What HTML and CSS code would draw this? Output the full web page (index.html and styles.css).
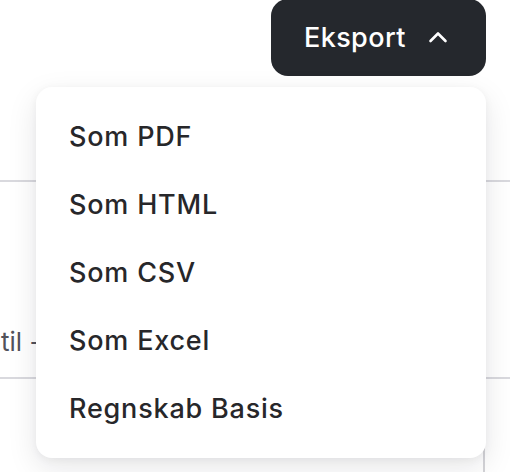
FILE: index.html
```html
<!DOCTYPE html>
<html lang="da">
<head>
<meta charset="utf-8">
<title>Eksport</title>
<link rel="stylesheet" href="styles.css">
</head>
<body>
<div class="page">
  <div class="toolbar">
    <div class="export">
      <button class="export-btn" type="button">
        <span>Eksport</span>
        <svg class="chev" width="20" height="12" viewBox="0 0 20 12"><path d="M2.5 10 L10 2.5 L17.5 10" fill="none" stroke="#fff" stroke-width="2.6" stroke-linecap="round" stroke-linejoin="round"/></svg>
      </button>
      <ul class="menu">
        <li class="menu-item">Som PDF</li>
        <li class="menu-item">Som HTML</li>
        <li class="menu-item">Som CSV</li>
        <li class="menu-item">Som Excel</li>
        <li class="menu-item">Regnskab Basis</li>
      </ul>
    </div>
  </div>
  <div class="table">
    <div class="row">
      <span class="cell">til -</span>
    </div>
    <div class="foot">
      <div class="side-card"></div>
    </div>
  </div>
</div>
</body>
</html>
```
FILE: styles.css
```css
* { box-sizing: border-box; }
html, body { margin: 0; padding: 0; }
body {
  background: #fff;
  font-family: Inter, "Noto Sans", sans-serif;
  width: 510px;
  height: 472px;
  overflow: hidden;
}
.page { position: relative; }
.toolbar {
  display: flex;
  justify-content: flex-end;
  padding-right: 24px;
  height: 180px;
}
.export { position: relative; height: 77px; }
.export-btn {
  display: flex;
  align-items: center;
  gap: 22px;
  height: 77px;
  width: 215px;
  padding: 0 38px 0 33px;
  border: 0;
  border-radius: 17px;
  background: #25282d;
  color: #fff;
  font-family: Inter, sans-serif;
  font-size: 27px;
  font-weight: 450;
  letter-spacing: 0.4px;
  margin-top: -1px;
}
.chev { display: block; margin-top: -2px; }
.menu {
  position: absolute;
  top: 87px;
  right: 0;
  width: 450px;
  margin: 0;
  padding: 15px 0 16px;
  list-style: none;
  background: #fff;
  border-radius: 16px;
  box-shadow: 0 10px 30px rgba(20, 20, 30, 0.10), 0 2px 8px rgba(20, 20, 30, 0.05);
  z-index: 2;
}
.menu-item {
  height: 68px;
  display: flex;
  align-items: center;
  padding-left: 33px;
  font-size: 27px;
  font-weight: 450;
  letter-spacing: 0.8px;
  color: #27272a;
}
.table {
  border-top: 2px solid #d9d9de;
}
.row {
  height: 197px;
  display: flex;
  align-items: center;
  border-bottom: 2px solid #d9d9de;
  padding-top: 124px;
}
.cell {
  font-size: 26px;
  color: #52525b;
  margin-left: 1px;
}
.foot {
  display: flex;
  justify-content: flex-end;
  padding-right: 25px;
  padding-top: 66px;
}
.side-card {
  width: 2px;
  height: 40px;
  background: #d4d4d8;
}
```
